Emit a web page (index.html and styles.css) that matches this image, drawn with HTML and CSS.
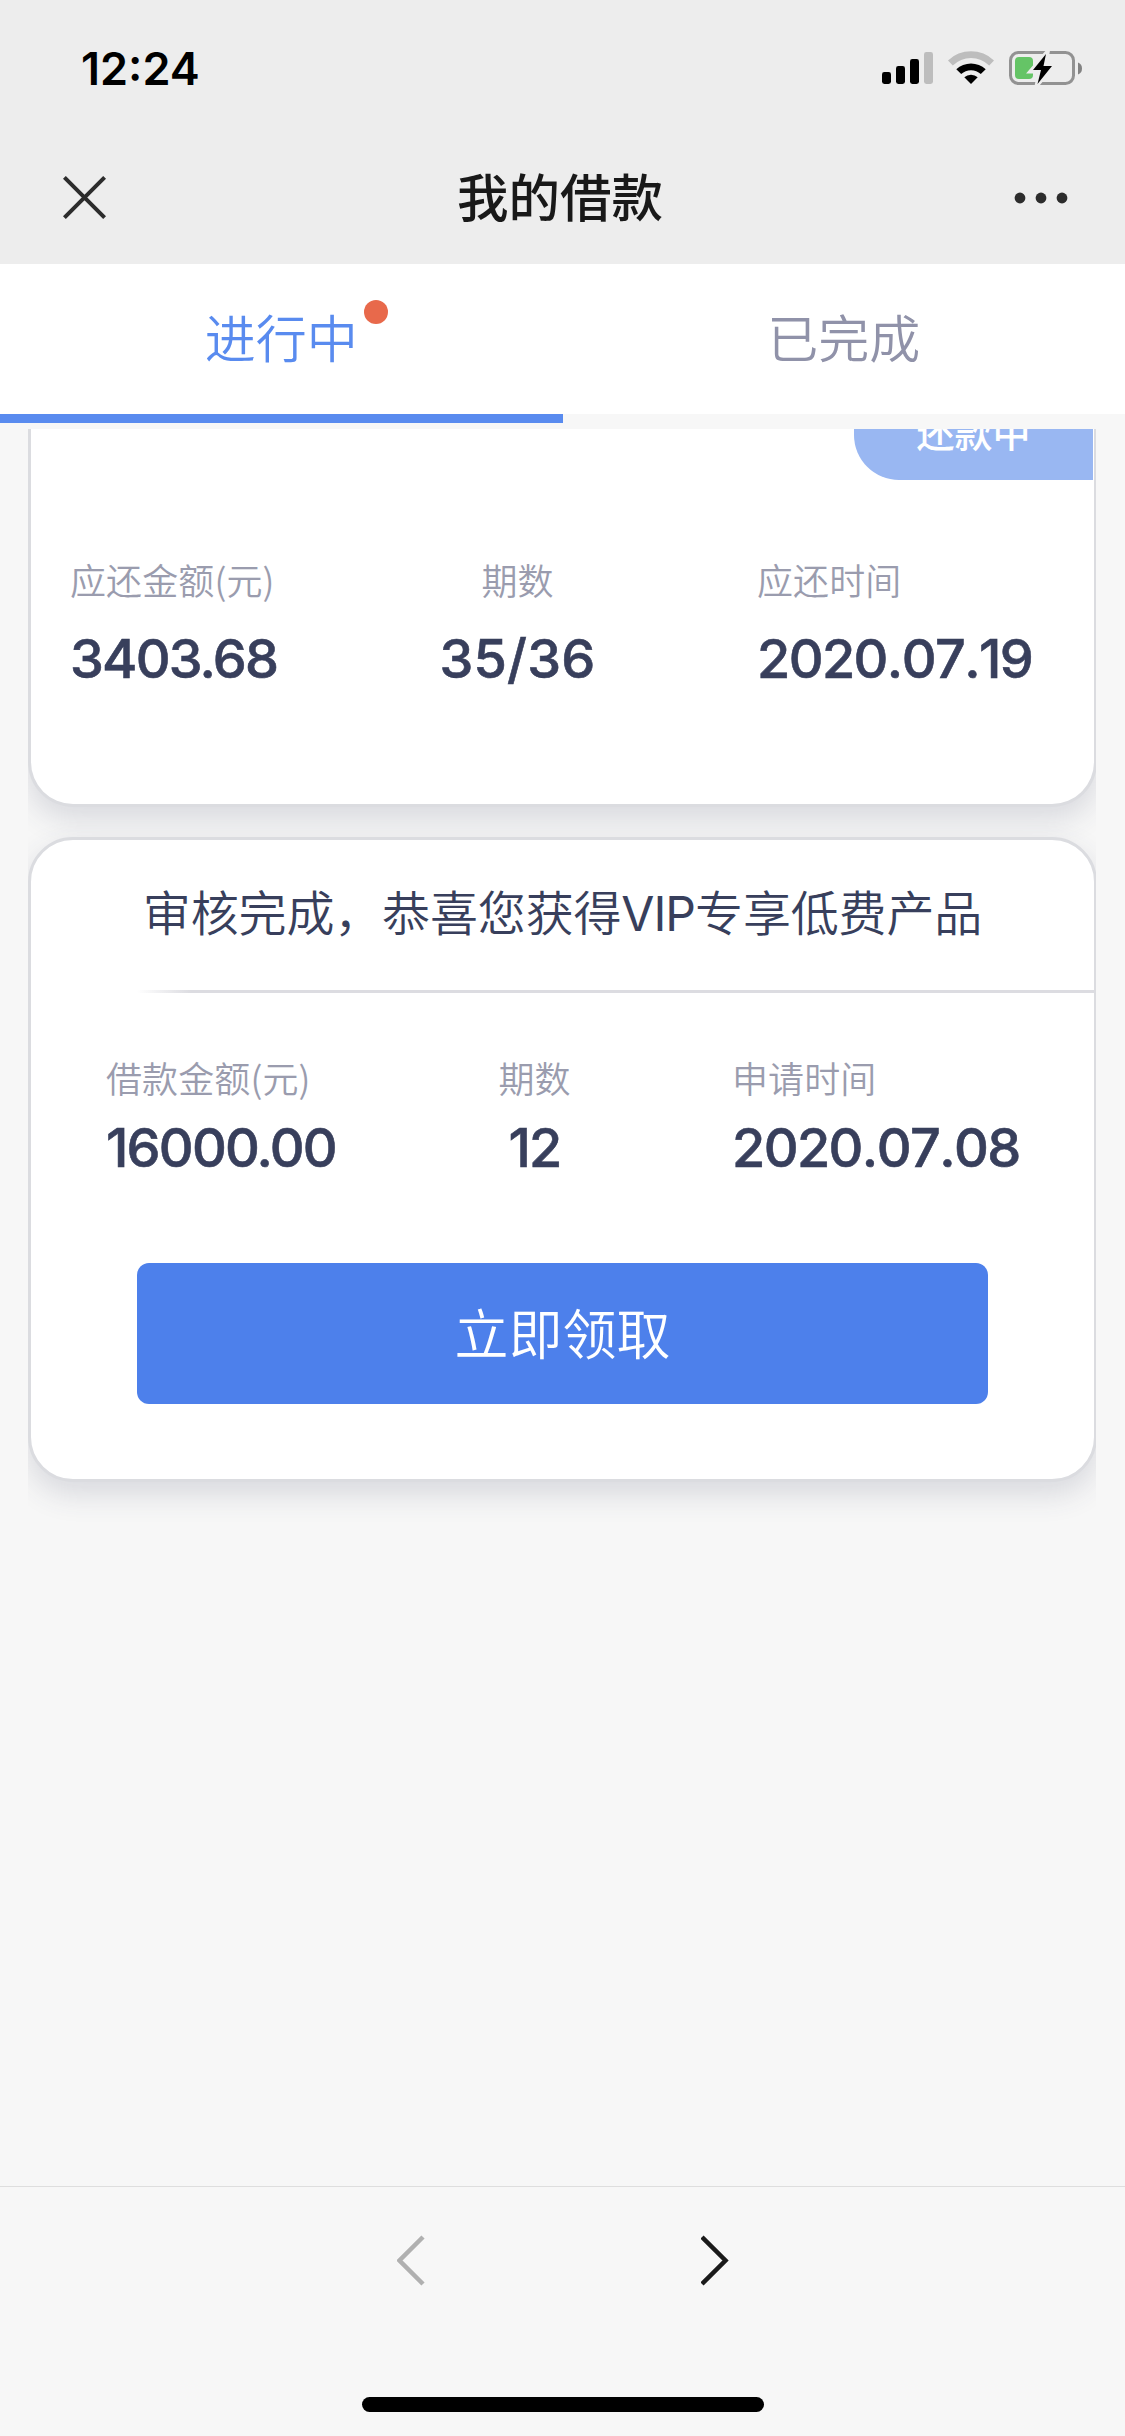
FILE: index.html
```html
<!DOCTYPE html>
<html lang="zh-CN">
<head>
<meta charset="utf-8">
<title>我的借款</title>
<link rel="stylesheet" href="styles.css">
</head>
<body>
<div class="screen">
  <header class="top">
    <div class="status">
      <span class="clock">12:24</span>
      <svg class="indicators" width="202" height="36" viewBox="0 0 202 36">
        <rect x="0" y="21" width="9" height="12" rx="2.4"/>
        <rect x="14" y="15" width="9" height="18" rx="2.4"/>
        <rect x="28" y="8" width="9" height="25" rx="2.4"/>
        <rect x="42" y="1" width="9" height="32" rx="2.4" fill="#bdbdbd"/>
        <path d="M66 9.500A33 33 0 0 1 112 9.500L107.200 14.500A26 26 0 0 0 70.800 14.500Z" fill="#bdbdbd"/>
        <path d="M74.300 18.200A21.500 21.500 0 0 1 103.700 18.200L98.800 23A14.500 14.500 0 0 0 79.200 23Z"/>
        <path d="M82.300 26.300A10 10 0 0 1 95.700 26.300L89 33Z"/>
        <rect x="128.500" y="1.500" width="63" height="31" rx="8" fill="none" stroke="#929292" stroke-width="3"/>
        <path d="M196 11.500q4 1.500 4 6t-4 6z" fill="#828282"/>
        <rect x="133" y="6" width="18" height="22" rx="4" fill="#65c466"/>
        <path d="M165 2L149.500 20H158L155.500 33L171 14.500H162.500Z" stroke="#ededed" stroke-width="5"/>
        <path d="M164 3L151 19H159L155.500 33L170 15H161.500Z"/>
      </svg>
    </div>
    <nav class="navbar">
      <svg width="43" height="43" viewBox="0 0 43 43" fill="none" stroke="#2c2c2c" stroke-width="4"><path d="M1.400 1.400L41.600 41.600M41.600 1.400L1.400 41.600"/></svg>
      <h1 class="title">我的借款</h1>
      <svg width="54" height="12" viewBox="0 0 54 12" fill="#2c2c2c"><circle cx="6" cy="6" r="5.400"/><circle cx="27" cy="6" r="5.400"/><circle cx="48" cy="6" r="5.400"/></svg>
    </nav>
  </header>
  <div class="tabs">
    <div class="tab active"><span class="tab-label">进行中<i class="dot"></i></span></div>
    <div class="tab"><span class="tab-label">已完成</span></div>
  </div>
  <main class="list">
    <section class="card repay">
      <div class="badge">还款中</div>
      <div class="facts">
        <div class="fact"><span class="label">应还金额(元)</span><span class="value">3403.68</span></div>
        <div class="fact mid"><span class="label">期数</span><span class="value wide">35/36</span></div>
        <div class="fact"><span class="label">应还时间</span><span class="value date">2020.07.19</span></div>
      </div>
    </section>
    <section class="card offer">
      <h2 class="headline">审核完成，恭喜您获得<span class="latin">VIP</span>专享低费产品</h2>
      <div class="rule"></div>
      <div class="facts">
        <div class="fact"><span class="label">借款金额(元)</span><span class="value">16000.00</span></div>
        <div class="fact mid"><span class="label">期数</span><span class="value">12</span></div>
        <div class="fact"><span class="label">申请时间</span><span class="value date">2020.07.08</span></div>
      </div>
      <button class="claim">立即领取</button>
    </section>
  </main>
  <footer class="toolbar">
    <div class="history">
      <svg width="28" height="52" viewBox="0 0 28 52" fill="none" stroke="#b0b0b0" stroke-width="4.500"><path d="M26 2L2.500 25.500L26 49"/></svg>
      <svg width="28" height="52" viewBox="0 0 28 52" fill="none" stroke="#1a1a1a" stroke-width="4.500"><path d="M1 2L24.500 25.500L1 49"/></svg>
    </div>
    <div class="home"></div>
  </footer>
</div>
</body>
</html>
```
FILE: styles.css
```css
* { box-sizing: border-box; }
body {
  margin: 0;
  font-family: Inter, "Noto Sans CJK SC", sans-serif;
  color: #383f5c;
}
.screen {
  width: 1125px;
  height: 2436px;
  display: flex;
  flex-direction: column;
  background: #f7f7f7;
  overflow: hidden;
}
.top { height: 264px; background: #ededed; flex: none; }
.status {
  height: 132px;
  padding: 6px 41px 0 81px;
  display: flex;
  align-items: center;
  justify-content: space-between;
  color: #000;
}
.clock { font-size: 45px; line-height: 54px; font-weight: 600; }
.navbar {
  height: 132px;
  padding: 0 57px 0 63px;
  display: flex;
  align-items: center;
  justify-content: space-between;
}
.navbar svg { margin-bottom: 1px; }
.title { margin: 0; font-size: 51.5px; line-height: 60px; font-weight: 500; color: #191919; }
.tabs { display: flex; height: 165px; flex: none; }
.tab {
  flex: 1;
  height: 159px;
  padding-bottom: 6px;
  border-bottom: 9px solid #f7f7f7;
  background: #fff;
  display: flex;
  align-items: center;
  justify-content: center;
  font-family: "Noto Sans CJK SC", sans-serif;
  font-size: 51px;
  line-height: 60px;
  font-weight: 350;
  color: #9092a9;
}
.tab.active { color: #598bef; border-color: #598bef; }
.tab-label { position: relative; }
.dot {
  position: absolute;
  left: 159px;
  top: -6px;
  width: 24px;
  height: 24px;
  border-radius: 50%;
  background: #e8694b;
}
.list {
  flex: 1;
  width: 1068px;
  margin-left: 28px;
  overflow: hidden;
}
.card {
  width: 1069px;
  border: 3px solid #dbdce0;
  border-radius: 45px;
  background: #fff;
  box-shadow: 0 12px 30px rgba(56, 63, 92, 0.16);
}
.card + .card { margin-top: 30px; }
.repay {
  height: 378px;
  border-top: 0;
  border-top-left-radius: 0;
  border-top-right-radius: 0;
}
.badge {
  width: 239px;
  height: 51px;
  margin-left: auto;
  margin-right: 1px;
  border-bottom-left-radius: 45px;
  background: #99b7f2;
  color: #fff;
  font-size: 38px;
  font-weight: 500;
  line-height: 9px;
  text-align: center;
}
.facts { display: flex; }
.fact { display: flex; flex-direction: column; }
.mid { align-items: center; }
.label { font-size: 36px; line-height: 48px; font-weight: 350; color: #9a9cae; font-family: "Noto Sans CJK SC", sans-serif; letter-spacing: 0.1px; }
.value { font-size: 54px; line-height: 64px; font-weight: 500; letter-spacing: -1.8px; -webkit-text-stroke: 0.6px currentColor; }
.date { letter-spacing: -1.6px; font-kerning: none; }
.wide { letter-spacing: 0.2px; }
.repay .facts { padding: 75px 0 0 39px; }
.repay .value { margin-top: 24px; }
.repay .fact:first-child { width: 371px; }
.repay .mid { width: 153px; margin-right: 163px; }
.offer { height: 645px; display: flex; flex-direction: column; }
.headline {
  margin: 0;
  padding-top: 45px;
  height: 150px;
  font-size: 48px;
  line-height: 58px;
  font-weight: 350;
  text-align: center;
  letter-spacing: -0.15px;
}
.latin { font-weight: 400; letter-spacing: -1px; }
.rule { height: 3px; margin-left: 106px; background: linear-gradient(90deg, #fff, #dcdce1 54px); }
.offer .facts { padding: 60px 0 0 75px; }
.offer .value { margin-top: 15px; }
.offer .fact:first-child { width: 353px; }
.offer .mid { width: 151px; margin-right: 122px; }
.claim {
  width: 851px;
  height: 141px;
  margin: 83px 0 0 106px;
  padding: 0 0 4px;
  border: 0;
  border-radius: 12px;
  background: #4d80eb;
  color: #fff;
  font-family: "Noto Sans CJK SC", sans-serif;
  font-size: 54px;
  font-weight: 350;
}
.toolbar {
  flex: none;
  height: 250px;
  border-top: 1px solid #dedede;
  display: flex;
  flex-direction: column;
  justify-content: space-between;
  align-items: center;
  padding: 48px 0 24px;
}
.history { display: flex; gap: 276px; }
.home { width: 402px; height: 15px; border-radius: 8px; background: #000; }
```
